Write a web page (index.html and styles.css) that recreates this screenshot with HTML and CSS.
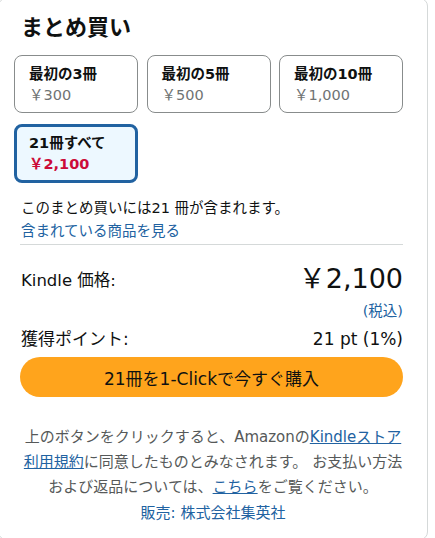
FILE: index.html
```html
<!DOCTYPE html>
<html lang="ja">

<head>
    <meta charset="UTF-8">
    <meta name="viewport" content="width=device-width, initial-scale=1.0">
    <title>まとめ買い</title>
    <link rel="stylesheet" href="styles.css">
</head>

<body>

    <div class="bundle-box">
        <h2 class="bundle-title">まとめ買い</h2>

        <div class="bundle-grid">
            <div class="bundle-option">
                <div class="option-name">最初の3冊</div>
                <div class="option-price">￥300</div>
            </div>
            <div class="bundle-option">
                <div class="option-name">最初の5冊</div>
                <div class="option-price">￥500</div>
            </div>
            <div class="bundle-option">
                <div class="option-name">最初の10冊</div>
                <div class="option-price">￥1,000</div>
            </div>
            <div class="bundle-option selected">
                <div class="option-name">21冊すべて</div>
                <div class="option-price">￥2,100</div>
            </div>
        </div>

        <p class="bundle-note">このまとめ買いには21 冊が含まれます。</p>
        <a class="link items-link" href="#">含まれている商品を見る</a>

        <hr class="divider">

        <div class="price-row">
            <span class="price-label">Kindle 価格:</span>
            <span class="price-value">￥2,100</span>
        </div>
        <div class="tax-note">(税込)</div>

        <div class="points-row">
            <span>獲得ポイント:</span>
            <span>21 pt (1%)</span>
        </div>

        <button class="buy-button">21冊を1-Clickで今すぐ購入</button>

        <p class="terms">
            上のボタンをクリックすると、Amazonの<a class="link underline" href="#">Kindleストア</a><br><a class="link underline" href="#">利用規約</a>に同意したものとみなされます。 お支払い方法<br>および返品については、<a class="link underline" href="#">こちら</a>をご覧ください。
        </p>
        <p class="seller">販売: 株式会社集英社</p>
    </div>

</body>

</html>
```

FILE: styles.css
```css
body {
    margin: 0;
    background: #ffffff;
    font-family: 'DejaVu Sans', 'Noto Sans CJK JP', sans-serif;
    color: #0f1111;
}

.bundle-box {
    width: 430px;
    height: 542px;
    margin: -2px 0 0 -2px;
    padding: 15px 24px 0 15px;
    box-sizing: border-box;
    border: 1px solid #d5d9d9;
    border-radius: 8px;
}

.bundle-title {
    margin: 0 0 13px 7px;
    font-size: 22px;
    font-weight: bold;
    line-height: 28px;
}

.bundle-grid {
    display: grid;
    grid-template-columns: repeat(3, 124px);
    gap: 11px 8.5px;
}

.bundle-option {
    height: 58px;
    box-sizing: border-box;
    border: 1px solid #888c8c;
    border-radius: 8px;
    padding: 8px 14px;
}

.option-name {
    font-size: 14.5px;
    font-weight: bold;
    line-height: 20px;
}

.option-price {
    font-size: 14.5px;
    line-height: 22px;
    color: #6f7373;
}

.selected {
    height: 59px;
    border: 3px solid #2162a1;
    background: #edf8ff;
    padding: 6px 12px;
}

.selected .option-price {
    color: #cc0c39;
    font-weight: bold;
}

.bundle-note {
    margin: 14px 0 0 7px;
    font-size: 14.5px;
    line-height: 22px;
}

.link {
    color: #2162a1;
    text-decoration: none;
}

.items-link {
    display: block;
    margin-left: 7px;
    font-size: 14.5px;
    line-height: 24px;
}

.underline {
    text-decoration: underline;
}

.divider {
    margin: 1px 0 0 6px;
    border: none;
    border-top: 1px solid #d5d9d9;
}

.price-row {
    display: flex;
    justify-content: space-between;
    align-items: center;
    margin: 14px 0 0 7px;
    height: 40px;
}

.price-label {
    font-size: 16.5px;
}

.price-value {
    font-size: 27px;
    line-height: 40px;
}

.tax-note {
    margin-top: 2px;
    text-align: right;
    font-size: 14.5px;
    line-height: 20px;
    color: #2162a1;
}

.points-row {
    display: flex;
    justify-content: space-between;
    margin: 6px 0 0 7px;
    font-size: 17px;
    line-height: 24px;
}

.buy-button {
    display: block;
    width: calc(100% - 6px);
    height: 40px;
    margin: 6px 0 0 6px;
    border: none;
    border-radius: 20px;
    background: #ffa41c;
    color: #0f1111;
    font-family: inherit;
    font-size: 17px;
}

.terms {
    margin: 28px -6px 0 3px;
    text-align: center;
    font-size: 15px;
    line-height: 25px;
    color: #565959;
}

.seller {
    margin: 1px -6px 0 3px;
    text-align: center;
    font-size: 15px;
    line-height: 25px;
    color: #2162a1;
}
```
